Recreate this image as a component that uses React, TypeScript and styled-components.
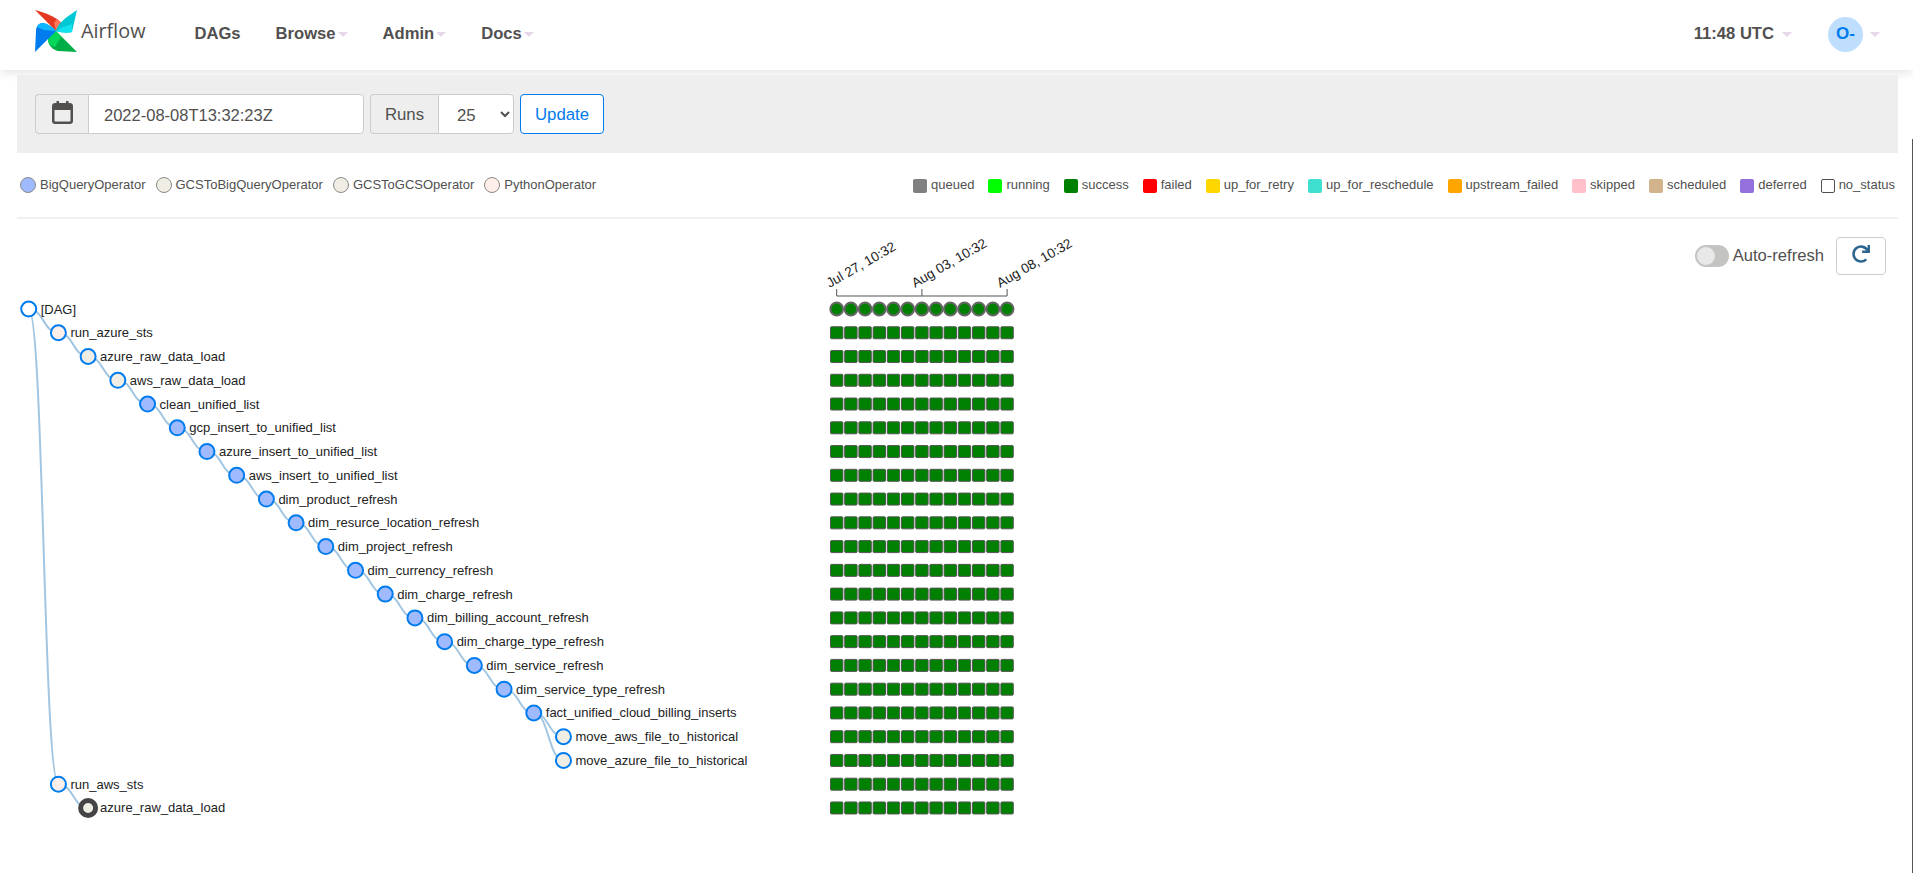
import * as React from "react"
import styled, { createGlobalStyle } from "styled-components"
import { FaRedo } from "react-icons/fa"

const GlobalStyle = createGlobalStyle`
    html, body {
        margin: 0;
        padding: 0;
        height: 100%;
        background: #fff;
        overflow: hidden;
        font-family: "Liberation Sans", Arial, sans-serif;
        color: #51504f;
    }
`

const TEXT = "#51504f"
const BLUE = "#017cee"
const NODE_BLUE = "#a0baff"
const NODE_GCS = "#f0ede4"
const NODE_PY = "#ffefeb"

interface TaskRow {
    label: string;
    depth: number;
    fill: string;
    active?: boolean;
}

const tasks: TaskRow[] = [
    { label: "[DAG]", depth: 0, fill: "#fff" },
    { label: "run_azure_sts", depth: 1, fill: NODE_PY },
    { label: "azure_raw_data_load", depth: 2, fill: NODE_GCS },
    { label: "aws_raw_data_load", depth: 3, fill: NODE_GCS },
    { label: "clean_unified_list", depth: 4, fill: NODE_BLUE },
    { label: "gcp_insert_to_unified_list", depth: 5, fill: NODE_BLUE },
    { label: "azure_insert_to_unified_list", depth: 6, fill: NODE_BLUE },
    { label: "aws_insert_to_unified_list", depth: 7, fill: NODE_BLUE },
    { label: "dim_product_refresh", depth: 8, fill: NODE_BLUE },
    { label: "dim_resurce_location_refresh", depth: 9, fill: NODE_BLUE },
    { label: "dim_project_refresh", depth: 10, fill: NODE_BLUE },
    { label: "dim_currency_refresh", depth: 11, fill: NODE_BLUE },
    { label: "dim_charge_refresh", depth: 12, fill: NODE_BLUE },
    { label: "dim_billing_account_refresh", depth: 13, fill: NODE_BLUE },
    { label: "dim_charge_type_refresh", depth: 14, fill: NODE_BLUE },
    { label: "dim_service_refresh", depth: 15, fill: NODE_BLUE },
    { label: "dim_service_type_refresh", depth: 16, fill: NODE_BLUE },
    { label: "fact_unified_cloud_billing_inserts", depth: 17, fill: NODE_BLUE },
    { label: "move_aws_file_to_historical", depth: 18, fill: NODE_GCS },
    { label: "move_azure_file_to_historical", depth: 18, fill: NODE_GCS },
    { label: "run_aws_sts", depth: 1, fill: NODE_PY },
    { label: "azure_raw_data_load", depth: 2, fill: NODE_GCS, active: true },
]

// parent row -> child row, as in the tree layout
const links: [number, number][] = [
    [0, 1], [1, 2], [2, 3], [3, 4], [4, 5], [5, 6], [6, 7], [7, 8], [8, 9], [9, 10], [10, 11],
    [11, 12], [12, 13], [13, 14], [14, 15], [15, 16], [16, 17], [17, 18], [17, 19], [0, 20], [20, 21],
]

const operators = [
    { name: "BigQueryOperator", color: NODE_BLUE },
    { name: "GCSToBigQueryOperator", color: NODE_GCS },
    { name: "GCSToGCSOperator", color: NODE_GCS },
    { name: "PythonOperator", color: NODE_PY },
]

const states = [
    { name: "queued", color: "gray" },
    { name: "running", color: "lime" },
    { name: "success", color: "green" },
    { name: "failed", color: "red" },
    { name: "up_for_retry", color: "gold" },
    { name: "up_for_reschedule", color: "turquoise" },
    { name: "upstream_failed", color: "orange" },
    { name: "skipped", color: "pink" },
    { name: "scheduled", color: "tan" },
    { name: "deferred", color: "mediumpurple" },
    { name: "no_status", color: "#fff" },
]

const Navbar = styled.nav`
    height: 70px;
    display: flex;
    align-items: center;
    padding: 0 33px 2px 35px;
    box-sizing: border-box;
    background: #fff;
    box-shadow: 0 2px 10px rgba(0, 0, 0, 0.12);
`

const Brand = styled.div`
    display: flex;
    align-items: center;
    gap: 4px;
    margin: 0 49px 6px 0;
`

const BrandName = styled.span`
    font-family: "Open Sans", sans-serif;
    font-size: 19.8px;
    line-height: 1;
    color: ${TEXT};
`

const NavItem = styled.span`
    display: flex;
    align-items: center;
    gap: 2px;
    margin-right: 35px;
    font-size: 16.6px;
    font-weight: 700;
    color: ${TEXT};
`

const Caret = styled.i`
    display: block;
    width: 0;
    height: 0;
    border-left: 5px solid transparent;
    border-right: 5px solid transparent;
    border-top: 5px solid #e6d8e8;
`

const NavRight = styled.div`
    margin-left: auto;
    display: flex;
    align-items: center;
`

const Clock = styled(NavItem)`
    gap: 8px;
    margin-right: 36px;
`

const Avatar = styled.span`
    width: 35px;
    height: 35px;
    border-radius: 50%;
    background: #bfdefd;
    color: ${BLUE};
    font-size: 17px;
    font-weight: 700;
    display: flex;
    align-items: center;
    justify-content: center;
    margin-right: 7px;
`

const Main = styled.main`
    padding: 5px 15px 0 17px;
`

const FilterPanel = styled.form`
    height: 78px;
    box-sizing: border-box;
    background: #eee;
    padding: 19px 18px;
    display: flex;
    gap: 6px;
`

const InputGroup = styled.div`
    display: flex;
    height: 40px;
`

const Addon = styled.span<{ $width: number }>`
    width: ${p => p.$width}px;
    box-sizing: border-box;
    padding-top: 1px;
    display: flex;
    align-items: center;
    justify-content: center;
    background: #eee;
    border: 1px solid #ccc;
    border-right: 0;
    border-radius: 4px 0 0 4px;
    font-size: 16.8px;
    color: ${TEXT};
`

const IconAddon = styled(Addon)`
    padding: 0 0 3px;
`

const DateInput = styled.input`
    width: 276px;
    box-sizing: border-box;
    padding: 2px 15px 0;
    background: #fff;
    border: 1px solid #ccc;
    border-radius: 0 4px 4px 0;
    font: 16.5px "Liberation Sans", Arial, sans-serif;
    color: ${TEXT};
    outline: 0;
`

const RunsSelect = styled.select`
    width: 76px;
    box-sizing: border-box;
    padding: 2px 14px 0;
    background: #fff;
    border: 1px solid #ccc;
    border-radius: 0 4px 4px 0;
    font: 16.8px "Liberation Sans", Arial, sans-serif;
    color: ${TEXT};
    outline: 0;
`

const UpdateButton = styled.button`
    width: 84px;
    height: 40px;
    background: #fff;
    border: 1px solid ${BLUE};
    border-radius: 4px;
    font: 16.8px "Liberation Sans", Arial, sans-serif;
    color: ${BLUE};
    padding: 2px 0 0;
`

const LegendRow = styled.div`
    height: 63px;
    padding: 0 3px 1px;
    display: flex;
    align-items: center;
    justify-content: space-between;
    font-size: 13px;
    color: ${TEXT};
    border-bottom: 2px solid #f0f0f0;
`

const LegendGroup = styled.div<{ $gap: number }>`
    display: flex;
    gap: ${p => p.$gap}px;
`

const LegendItem = styled.span`
    display: flex;
    align-items: center;
    gap: 4px;
    line-height: 16px;
`

const OperatorDot = styled.i<{ $color: string }>`
    display: block;
    width: 16px;
    height: 16px;
    box-sizing: border-box;
    border-radius: 50%;
    border: 1px solid #8a8a88;
    background: ${p => p.$color};
`

const StateSwatch = styled.i<{ $color: string; $outlined?: boolean }>`
    display: block;
    width: 14px;
    height: 14px;
    margin-top: 2px;
    box-sizing: border-box;
    border-radius: 2px;
    background: ${p => p.$color};
    border: ${p => (p.$outlined ? "1px solid #51504f" : "0")};
`

const ChartStack = styled.section`
    display: grid;
    grid-template-columns: 1fr;
`

const ChartSvg = styled.svg`
    grid-area: 1 / 1;
    display: block;
    width: 1100px;
    height: 630px;
`

const RefreshBar = styled.div`
    grid-area: 1 / 1;
    justify-self: end;
    align-self: start;
    margin: 18px 12px 0 0;
    display: flex;
    align-items: center;
    gap: 4px;
`

const Toggle = styled.span`
    width: 34px;
    height: 22px;
    box-sizing: border-box;
    padding: 2px;
    border-radius: 11px;
    background: #c4c4c2;
`

const ToggleKnob = styled.i`
    display: block;
    width: 18px;
    height: 18px;
    border-radius: 50%;
    background: #e8e8e8;
`

const RefreshLabel = styled.span`
    font-size: 16.6px;
    color: ${TEXT};
    margin-right: 8px;
`

const RefreshButton = styled.button`
    width: 50px;
    height: 38px;
    padding: 0 0 2px;
    background: #fff;
    border: 1px solid #ccc;
    border-radius: 4px;
    color: #2c6690;
`

const Link = styled.path`
    fill: none;
    stroke: #a2c6e2;
    stroke-width: 2;
`

const Node = styled.circle<{ $fill: string; $active?: boolean }>`
    fill: ${p => p.$fill};
    stroke: ${p => (p.$active ? "#444" : BLUE)};
    stroke-width: ${p => (p.$active ? 5 : 2)};
`

const NodeLabel = styled.text`
    font-size: 13px;
    fill: #222;
`

const TickLabel = styled.text`
    font-size: 13.5px;
    fill: #222;
`

const Bracket = styled.path`
    fill: none;
    stroke: #555;
    stroke-width: 1;
`

const DagRun = styled.circle`
    fill: green;
    stroke: #666;
    stroke-width: 2;
`

const TaskCell = styled.rect`
    fill: green;
    stroke: #555;
    stroke-width: 1;
`

const EdgeLine = styled.div`
    position: fixed;
    top: 139px;
    right: 0;
    bottom: 0;
    width: 1px;
    background: #555;
`

const Logo = () => (
    <svg width="42" height="42" viewBox="0 0 42 42">
        <path d="M0 0C8 2 16 5 22 9C26 12 28 15 28 17L21 21Z" fill="#e43921" />
        <path d="M22 9C26 12 28 15 28 17L21 21L19 13Z" fill="#ff7557" />
        <path d="M42 0L37 22C33 23 27 23 21 21C22 14 30 8 42 0Z" fill="#00c7d4" />
        <path d="M37 22C33 23 27 23 21 21L28 17L37 14Z" fill="#11e1ee" />
        <path d="M42 42L23 41C18 40 13 35 13 30C13 26 17 23 21 21Z" fill="#00ad46" />
        <path d="M13 30C13 26 17 23 21 21L26 27L20 37C16 36 13 33 13 30Z" fill="#04d659" />
        <path d="M0 42L1 21C1 16 4 13 8 13C13 14 18 17 21 21Z" fill="#017cee" />
        <path d="M2 17C3 14 5 13 8 13C13 14 18 17 21 21L9 20Z" fill="#0cb6ff" />
    </svg>
)

const CalendarIcon = () => (
    <svg width="21" height="23" viewBox="0 0 21 23">
        <rect x="1.25" y="3.25" width="18.5" height="18.5" rx="2" fill="none" stroke={TEXT} strokeWidth="2.5" />
        <rect x="1" y="3" width="19" height="6" fill={TEXT} />
        <rect x="4.5" y="0" width="2.5" height="4" fill={TEXT} />
        <rect x="14" y="0" width="2.5" height="4" fill={TEXT} />
    </svg>
)

// tree geometry, in chart coordinates (chart starts at 17,219 on the page)
const TREE_X = 11.7
const TREE_Y = 90
const INDENT = 29.71
const ROW = 23.76
const GRID_X = 819.7
const COL = 14.2
const COLS = Array.from({ length: 13 }, (_, i) => i)

const nodeX = (depth: number) => TREE_X + depth * INDENT
const rowY = (row: number) => TREE_Y + row * ROW

const linkPath = (from: number, to: number) => {
    const x0 = nodeX(tasks[from].depth)
    const x1 = nodeX(tasks[to].depth)
    const y0 = rowY(from)
    const y1 = rowY(to)
    const mid = (x0 + x1) / 2
    return `M${x0} ${y0}C${mid} ${y0} ${mid} ${y1} ${x1} ${y1}`
}

const TreeChart = () => (
    <ChartSvg>
        {links.map(([from, to]) => (
            <Link key={`${from}-${to}`} d={linkPath(from, to)} />
        ))}
        {tasks.map((task, i) => (
            <g key={i}>
                <Node
                    cx={nodeX(task.depth)}
                    cy={rowY(i)}
                    r={7.5}
                    $fill={task.fill}
                    $active={task.active}
                />
                <NodeLabel x={nodeX(task.depth) + 12} y={rowY(i) + 4.5}>{task.label}</NodeLabel>
            </g>
        ))}
        <Bracket d={`M${GRID_X} 70V77H${GRID_X + 12 * COL}V70M${GRID_X + 6 * COL} 70V77`} />
        <TickLabel transform={`translate(${GRID_X - 7} 69) rotate(-30)`}>Jul 27, 10:32</TickLabel>
        <TickLabel transform={`translate(${GRID_X + 6 * COL - 7} 69) rotate(-30)`}>Aug 03, 10:32</TickLabel>
        <TickLabel transform={`translate(${GRID_X + 12 * COL - 7} 69) rotate(-30)`}>Aug 08, 10:32</TickLabel>
        {COLS.map(c => (
            <DagRun key={c} cx={GRID_X + c * COL} cy={rowY(0)} r={6.4} />
        ))}
        {tasks.slice(1).map((_, i) =>
            COLS.map(c => (
                <TaskCell
                    key={`${i}-${c}`}
                    x={GRID_X + c * COL - 6.2}
                    y={rowY(i + 1) - 6}
                    width={12.4}
                    height={12}
                    rx={1}
                />
            ))
        )}
    </ChartSvg>
)

const App = () => (
    <>
        <GlobalStyle />
        <Navbar>
            <Brand>
                <Logo />
                <BrandName>Airflow</BrandName>
            </Brand>
            <NavItem>DAGs</NavItem>
            <NavItem>Browse<Caret /></NavItem>
            <NavItem>Admin<Caret /></NavItem>
            <NavItem>Docs<Caret /></NavItem>
            <NavRight>
                <Clock>11:48 UTC<Caret /></Clock>
                <Avatar>O-</Avatar>
                <Caret />
            </NavRight>
        </Navbar>
        <Main>
            <FilterPanel>
                <InputGroup>
                    <IconAddon $width={53}><CalendarIcon /></IconAddon>
                    <DateInput defaultValue="2022-08-08T13:32:23Z" />
                </InputGroup>
                <InputGroup>
                    <Addon $width={68}>Runs</Addon>
                    <RunsSelect defaultValue="25">
                        <option>25</option>
                    </RunsSelect>
                </InputGroup>
                <UpdateButton type="button">Update</UpdateButton>
            </FilterPanel>
            <LegendRow>
                <LegendGroup $gap={10}>
                    {operators.map(op => (
                        <LegendItem key={op.name}>
                            <OperatorDot $color={op.color} />
                            {op.name}
                        </LegendItem>
                    ))}
                </LegendGroup>
                <LegendGroup $gap={14}>
                    {states.map(state => (
                        <LegendItem key={state.name}>
                            <StateSwatch $color={state.color} $outlined={state.name === "no_status"} />
                            {state.name}
                        </LegendItem>
                    ))}
                </LegendGroup>
            </LegendRow>
            <ChartStack>
                <TreeChart />
                <RefreshBar>
                    <Toggle><ToggleKnob /></Toggle>
                    <RefreshLabel>Auto-refresh</RefreshLabel>
                    <RefreshButton type="button"><FaRedo size={18} /></RefreshButton>
                </RefreshBar>
            </ChartStack>
        </Main>
        <EdgeLine />
    </>
)

export default App
